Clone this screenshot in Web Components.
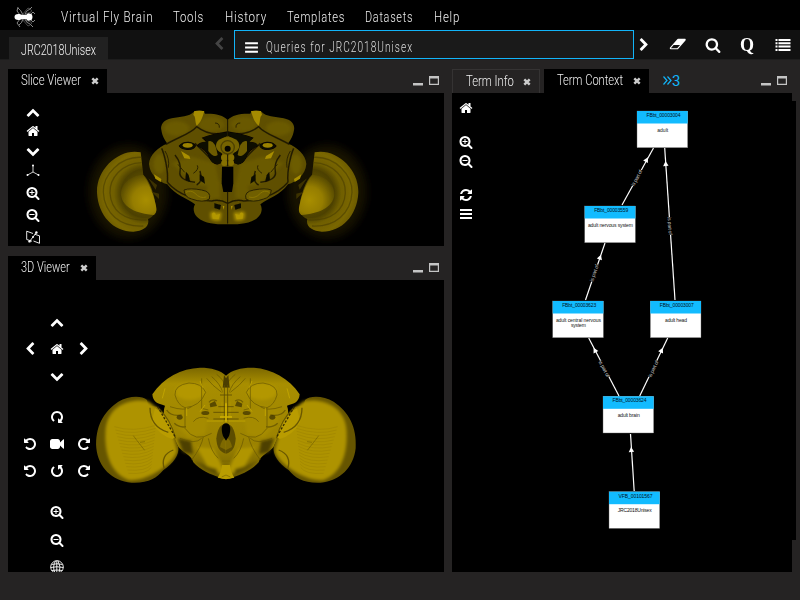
<!DOCTYPE html>
<html lang="en">
<head>
<meta charset="utf-8">
<title>Virtual Fly Brain</title>
<style>
html,body{margin:0;height:100%;overflow:hidden;background:#252323;font-family:Roboto,"Liberation Sans",sans-serif;color:#f0f0f0}
</style>
</head>
<body>
<vfb-app></vfb-app>
<script>
const F = {
left:'M1427 301l-531 531 531 531q19 19 19 45t-19 45l-166 166q-19 19-45 19t-45-19l-742-742q-19-19-19-45t19-45l742-742q19-19 45-19t45 19l166 166q19 19 19 45t-19 45z',
right:'M1363 877l-742 742q-19 19-45 19t-45-19l-166-166q-19-19-19-45t19-45l531-531-531-531q-19-19-19-45t19-45l166-166q19-19 45-19t45 19l742 742q19 19 19 45t-19 45z',
up:'M1683 1331l-166 165q-19 19-45 19t-45-19l-531-531-531 531q-19 19-45 19t-45-19l-166-165q-19-19-19-45.5t19-45.5l742-741q19-19 45-19t45 19l742 741q19 19 19 45.5t-19 45.5z',
down:'M1683 808l-742 741q-19 19-45 19t-45-19l-742-741q-19-19-19-45.5t19-45.5l166-165q19-19 45-19t45 19l531 531 531-531q19-19 45-19t45 19l166 165q19 19 19 45.5t-19 45.5z',
home:'M1472 992v480q0 26-19 45t-45 19h-384v-384h-256v384h-384q-26 0-45-19t-19-45v-480q0-1 .5-3t.5-3l575-474 575 474q1 2 1 6zm223-69l-62 74q-8 9-21 11h-3q-13 0-21-7l-692-577-692 577q-12 8-24 7-13-2-21-11l-62-74q-8-10-7-23.5t11-21.5l719-599q32-26 76-26t76 26l244 204v-195q0-14 9-23t23-9h192q14 0 23 9t9 23v408l219 182q10 8 11 21.5t-7 23.5z',
search:'M1216 832q0-185-131.5-316.5t-316.5-131.5-316.5 131.5-131.5 316.5 131.5 316.5 316.5 131.5 316.5-131.5 131.5-316.5zm512 832q0 52-38 90t-90 38q-54 0-90-38l-343-342q-179 124-399 124-143 0-273.5-55.5t-225-150-150-225-55.5-273.5 55.5-273.5 150-225 225-150 273.5-55.5 273.5 55.5 225 150 150 225 55.5 273.5q0 220-124 399l343 343q37 37 37 90z',
cw:'M1664 256v448q0 26-19 45t-45 19h-448q-42 0-59-40-17-39 14-69l138-138q-148-137-349-137-104 0-198.5 40.5t-163.5 109.5-109.5 163.5-40.5 198.5 40.5 198.5 109.5 163.5 163.5 109.5 198.5 40.5q119 0 225-52t179-147q7-10 23-12 15 0 25 9l137 138q9 8 9.5 20.5t-7.5 22.5q-109 132-264 204.5t-327 72.5q-156 0-298-61t-245-164-164-245-61-298 61-298 164-245 245-164 298-61q147 0 284.5 55.5t244.5 156.5l130-129q29-31 70-14 39 17 39 59z',
video:'M1792 352v1088q0 42-39 59-13 5-25 5-27 0-45-19l-403-403v166q0 119-84.5 203.5t-203.5 84.5h-704q-119 0-203.5-84.5t-84.5-203.5v-704q0-119 84.5-203.5t203.5-84.5h704q119 0 203.5 84.5t84.5 203.5v165l403-402q18-19 45-19 12 0 25 5 39 17 39 59z',
refresh:'M1639 1056q0 5-1 7-64 268-268 434.5t-478 166.5q-146 0-282.5-55t-243.5-157l-129 129q-19 19-45 19t-45-19-19-45v-448q0-26 19-45t45-19h448q26 0 45 19t19 45-19 45l-137 137q71 66 161 102t187 36q134 0 250-65t186-179q11-17 53-117 8-23 30-23h192q13 0 22.5 9.5t9.5 22.5zm25-800v448q0 26-19 45t-45 19h-448q-26 0-45-19t-19-45 19-45l138-138q-148-137-349-137-134 0-250 65t-186 179q-11 17-53 117-8 23-30 23h-199q-13 0-22.5-9.5t-9.5-22.5v-7q65-268 270-434.5t480-166.5q146 0 284 55.5t245 156.5l130-129q19-19 45-19t45 19 19 45z',
};
const p = d => `<path d="${d}"/>`;
const ICONS = {
  left:[1792,p(F.left)], right:[1792,p(F.right)], up:[1792,p(F.up)], down:[1792,p(F.down)],
  home:[1792,p(F.home)], search:[1792,p(F.search)], video:[1792,p(F.video)], refresh:[1792,p(F.refresh)],
  zin:[1792,p(F.search)+'<path d="M448 768h256V512h128v256h256v128H832v256H704V896H448z"/>'],
  zout:[1792,p(F.search)+'<path d="M448 768h640v128H448z"/>'],
  cw:[1792,p(F.cw)],
  cwturn:[1792,`<g transform="rotate(90 896 896)">${p(F.cw)}</g>`],
  ccw:[1792,`<g transform="translate(1792 0) scale(-1 1)">${p(F.cw)}</g>`],
  ccwturn:[1792,`<g transform="rotate(90 896 896) translate(1792 0) scale(-1 1)">${p(F.cw)}</g>`],
  bars:[14,'<path d="M1 2h12v2H1zM1 6h12v2H1zM1 10h12v2H1z"/>'],
  close:[14,'<path d="M4.300 4.300l5.400 5.400M9.700 4.300l-5.400 5.400" fill="none" stroke="currentColor" stroke-width="2.400"/>'],
  min:[14,'<path d="M2 10h10v2.500H2z"/>'],
  max:[14,'<path d="M2 3h10v9H2zM3.200 5.600v5.200h7.600V5.600z" fill-rule="evenodd"/>'],
  list:[16,'<path d="M.5 2h2v2h-2zM3.500 2h12v2h-12zM.5 5.300h2v2h-2zM3.500 5.300h12v2h-12zM.5 8.600h2v2h-2zM3.500 8.600h12v2h-12zM.5 12h2v2h-2zM3.500 12h12v2h-12z"/>'],
  eraser:[2048,'<path transform="translate(32 64)" fill-rule="evenodd" d="M960 1408l336-384h-768l-336 384h768zm1013-1077q15 34 9.500 71.500t-30.500 65.500l-896 1024q-38 44-96 44h-768q-38 0-69.500-20.500t-47.500-54.500q-15-34-9.500-71.500t30.500-65.500l896-1024q38-44 96-44h768q38 0 69.500 20.500t47.500 54.500z"/>'],
  axes:[14,'<path d="M7 1.500V8L1.500 11M7 8l5.500 3" fill="none" stroke="currentColor" stroke-width=".8"/><circle cx="7" cy="1.500" r="1"/><circle cx="1.500" cy="11" r="1"/><circle cx="12.500" cy="11" r="1"/>'],
  plane:[14,'<path d="M.7 1.200L7 3.500M.7 1.200V9.500L6 11.200M8.500 4.200l5 1.600v7.500L7.500 11M3.500 11.500L10.500 2.500" fill="none" stroke="currentColor" stroke-width=".9"/><circle cx="3.500" cy="11.400" r="1.200"/><circle cx="10.400" cy="2.500" r="1.200"/><circle cx="7" cy="7" r=".9"/>'],
  globe:[14,'<g fill="none" stroke="currentColor" stroke-width=".9"><circle cx="7" cy="7" r="6.300"/><path d="M1.500 4.500Q7 3 12.500 4.500M.7 7.500Q7 6 13.300 7.500M1.500 10.500Q7 9.500 12.500 10.500M5.500 .8Q2 7 5 13M8 .7Q11.500 7 9 13M6.800 .7V13"/></g>'],
};
class VfbIcon extends HTMLElement{
  connectedCallback(){
    const s=this.getAttribute('size')||14,[v,g]=ICONS[this.getAttribute('name')];
    this.attachShadow({mode:'open'}).innerHTML=`<style>:host{display:block;width:${s}px;height:${s}px;flex:none}svg{display:block;width:100%;height:100%}</style><svg viewBox="0 0 ${v} ${v}" fill="currentColor">${g}</svg>`;
  }
}
/* Condensed caption: squeezes its text to the width given by w. */
class VfbText extends HTMLElement{
  connectedCallback(){
    const w=+this.getAttribute('w');
    this.attachShadow({mode:'open'}).innerHTML=`<style>:host{display:block;flex:none;width:${w}px;height:20px;line-height:20px;font-weight:300;font-size:${this.getAttribute('size')||15}px}span{display:inline-block;white-space:nowrap;transform-origin:0 50%;letter-spacing:${this.getAttribute('ls')||0}px}</style><span><slot></slot></span>`;
    const s=this.shadowRoot.querySelector('span');
    s.style.transform=`scaleX(${w/(s.offsetWidth||w)})`;
  }
}
class VfbTab extends HTMLElement{
  connectedCallback(){
    const on=this.hasAttribute('on');
    this.attachShadow({mode:'open'}).innerHTML=`<style>:host{display:flex;box-sizing:border-box;height:24px;width:${this.getAttribute('width')}px;padding:1px 0 0 13px;background:${on?'#000':'#252323'};${on?'':'border:1px solid #353333;border-bottom:0;'}}vfb-icon{margin:4px 0 0 ${on?7:6}px;color:#ccc}</style><vfb-text size="15.500" w="${this.getAttribute('w')}">${this.getAttribute('label')}</vfb-text><vfb-icon size="14" name="close"></vfb-icon>`;
  }
}
class VfbPanel extends HTMLElement{
  connectedCallback(){
    this.attachShadow({mode:'open'}).innerHTML=`<style>:host{display:flex;flex-direction:column;min-height:0}header{display:flex;height:24px;flex:none}header ::slotted(vfb-tab[label="Term Context"]){margin-left:4px}.tools{margin-left:auto;display:flex;gap:2px;padding:4px 3px 0 0;color:#c4c4c4}main{flex:1;background:#000;position:relative;overflow:var(--clip,hidden);min-height:0}</style>
    <header><slot name="tabs"></slot><div class="tools"><vfb-icon name="min"></vfb-icon><vfb-icon name="max"></vfb-icon></div></header><main><slot></slot></main>`;
  }
}
/* Icon pad: items are "name@column,row"; rows lists the grid row heights. */
class VfbPad extends HTMLElement{
  connectedCallback(){
    const it=this.getAttribute('items').split(' ').map(s=>{const[n,c]=s.split('@'),[x,y]=c.split(',');return`<vfb-icon name="${n}" style="grid-area:${y}/${x}"></vfb-icon>`}).join('');
    this.attachShadow({mode:'open'}).innerHTML=`<style>:host{position:absolute;left:var(--x);top:var(--y);display:grid;grid-template-columns:repeat(3,27px);grid-template-rows:${this.getAttribute('rows')};color:#fff}</style>${it}`;
  }
}
const mirror=(g,w)=>`<g>${g}</g><g transform="translate(${w} 0) scale(-1 1)">${g}</g>`;
class SliceBrain extends HTMLElement{
  connectedCallback(){
    const half=`
    <ellipse cx="145" cy="290" rx="118" ry="140" fill="#2b2400" opacity=".55" filter="url(#b12)"/>
    <path d="M182 172C120 158 48 220 51 294C55 362 100 410 160 410C190 408 210 394 204 372C220 365 232 350 228 340C225 300 208 255 190 240Z" fill="url(#lobe)" filter="url(#b2)"/>
    <g fill="none" stroke="#4a3e00" stroke-width="4" filter="url(#b2)" opacity=".6"><path d="M184 187C120 184 68 240 70 292C73 355 120 396 190 393"/><path d="M185 203C125 205 88 250 90 294C93 345 130 378 200 375"/></g>
    <path d="M190 240C150 240 120 272 123 300C128 338 170 356 222 360C232 352 230 340 226 325C220 295 205 262 190 240Z" fill="url(#core)" filter="url(#b2)"/>
    <path d="M205 250l26 20-4 14zM215 290l22 6 0 16z" fill="#3d3300" filter="url(#b2)"/>
    <path d="M443 75C430 60 405 55 375 56C372 44 350 43 340 52C330 64 300 66 275 70C250 75 241 90 244 105C247 125 255 135 262 146C235 155 208 180 207 207C210 240 235 260 262 268C285 300 320 310 345 328C335 345 345 365 362 374C385 388 420 388 443 388Z" fill="#5e5000" filter="url(#b2)"/>
    <g filter="url(#b5)"><ellipse cx="290" cy="100" rx="38" ry="22" fill="#6a5a00"/><ellipse cx="395" cy="88" rx="38" ry="22" fill="#695800"/><ellipse cx="238" cy="207" rx="18" ry="30" fill="#6c5b00"/><path d="M275 205l60-20 70 20 15 70-70-5z" fill="#6a5a00"/><path d="M385 255l35 5v50l-45 5z" fill="#6a5a00"/></g>
    <g fill="none" stroke="#1e1900" stroke-width="4.500" filter="url(#b2)" opacity=".9"><path d="M258 148C290 128 330 118 350 95C380 118 415 120 443 110"/><path d="M245 160C252 175 266 225 262 262"/><path d="M285 180Q305 205 300 230T345 262"/><path d="M345 145Q370 168 390 190T415 205"/><path d="M262 262C295 300 350 318 395 318Q420 312 443 325M360 228Q370 260 350 270"/></g>
    <path d="M343 48L373 48C366 72 362 82 350 92C344 78 348 66 340 60Z" fill="#a58b00" filter="url(#b1)"/>
    <path d="M365 128Q398 115 443 110L443 122Q418 130 414 155Q435 180 423 205Q400 215 388 190Q380 165 350 152Q358 140 378 140Z" fill="#080700" filter="url(#b2)"/>
    <path d="M385 139q20-8 28 41q-12 10-28-12z" fill="#6d5c00" filter="url(#b1)"/>
    <path d="M296 153q10-14 30-13q22 4 22 13q-6 13-26 12q-20-2-26-12z" fill="#080700" filter="url(#b1)"/><ellipse cx="323" cy="151" rx="15" ry="7" fill="#9b8200" filter="url(#b1)"/>
    <path d="M303 168l25 15 3 9-18-2zM222 238l22 14-2 9-16-10z" fill="#a88e00" filter="url(#b1)"/>
    <path d="M318 230l8 10 5 22-15-8zM359 238l13 8 3 20-16-10zM403 325l20 5-3 14-17-5z" fill="#0f0c00" filter="url(#b1)"/>
    <path d="M312 285Q330 278 365 285Q395 290 388 312Q370 325 335 312Q314 307 312 285Z" fill="#6f5e00" stroke="#2a2300" stroke-width="3" filter="url(#b1)"/><path d="M318 292q15-8 27 3q15 17 34 11" fill="none" stroke="#8a7500" stroke-width="3" filter="url(#b1)"/>
    <path d="M390 354q12-10 20 0q8-6 15 0l-3 22q-16 6-30-4z" fill="#a68c00" filter="url(#b5)"/><path d="M396 356q8-8 12 4l12-3-4 16-18-2zM428 332l5 2-2 10z" fill="#b39800" filter="url(#b2)"/>
    <path d="M405 84q14 0 13 14M255 168q14 22 10 50M340 235q18-12 12-24M294 208l20 24" fill="none" stroke="#2b2400" stroke-width="3" filter="url(#b1)"/>`;
    this.attachShadow({mode:'open'}).innerHTML=`<style>:host{display:block;margin:2px 0 0 72px;width:300px;height:150px}svg{display:block;width:100%;height:100%}</style>
    <svg viewBox="0 0 900 450"><defs><radialGradient id="lobe" gradientUnits="userSpaceOnUse" cx="195" cy="295" r="145"><stop offset="0" stop-color="#6d5c00"/><stop offset=".5" stop-color="#4d4100"/><stop offset=".64" stop-color="#6f5e00"/><stop offset=".85" stop-color="#7a6700"/><stop offset="1" stop-color="#6a5900"/></radialGradient><radialGradient id="core" gradientUnits="userSpaceOnUse" cx="198" cy="315" r="80"><stop offset="0" stop-color="#a88e00"/><stop offset=".5" stop-color="#957d00"/><stop offset="1" stop-color="#574a00"/></radialGradient>${[1,2,5,12].map(n=>`<filter id="b${n}" x="-50%" y="-50%" width="200%" height="200%"><feGaussianBlur stdDeviation="${n}"/></filter>`).join('')}</defs>
    <g>${mirror(half,886)}
    <ellipse cx="443" cy="152" rx="35" ry="26" fill="#756300"/><circle cx="443" cy="157" r="20" fill="none" stroke="#4d4000" stroke-width="4"/><circle cx="443" cy="161" r="9" fill="#060500"/>
    <path d="M426 215h34v50l-4 26h-26l-5-26z" fill="#030200" filter="url(#b2)"/><circle cx="433" cy="188" r="10" fill="#857000"/><circle cx="453" cy="188" r="10" fill="#857000"/><circle cx="433" cy="204" r="9" fill="#857000"/><circle cx="453" cy="204" r="9" fill="#857000"/>
    <path d="M443 75v38M443 290v95M443 178v35" stroke="#1c1700" stroke-width="3"/></g></svg>`;
  }
}
class SurfaceBrain extends HTMLElement{
  connectedCallback(){
    let rings='';
    for(let i=0;i<15;i++) rings+=`<path d="M${88+i*3} ${215+i*10}q55 ${18-i} ${125-i*4} ${-4-i}"/>`;
    const lobe='M186 135C170 120 130 122 100 140C55 170 30 215 34 280C40 335 80 380 140 383C190 385 215 370 235 345C265 325 283 300 280 275C262 230 240 170 215 155L190 152Z';
    const core='M423 62C405 45 380 38 345 38C290 40 235 68 202 118C204 142 218 146 240 152C225 190 262 235 280 275C290 290 320 300 325 322C345 345 380 360 400 366L412 372H424Z';
    const half=`
    <path d="${core}" fill="url(#sh)"/>
    <g filter="url(#s4)"><ellipse cx="315" cy="110" rx="44" ry="25" fill="#b39700"/><path d="M260 160l60-12 50 30-10 60-50 10-40-40z" fill="#a58b00"/><path d="M335 275l50 5 30 60v20l-45-20z" fill="#b09500"/><path d="M278 250l40 8 6 40-30-6z" fill="#4d4000"/><path d="M325 315q30 30 75 45l-5-18q-40-10-70-27z" fill="#5c4d00"/></g>
    <g fill="none" stroke="#665500" stroke-width="2.500" opacity=".8"><path d="M270 120Q268 90 312 84Q350 84 362 112Q345 155 300 158Q278 150 270 120"/><path d="M350 70V160L370 165M380 65Q405 85 415 115M365 70Q380 90 410 112M395 58Q420 78 420 95"/><path d="M255 155Q300 170 320 155M300 160V220Q330 265 380 235M325 200Q340 180 370 190M285 250Q330 270 350 250M320 315Q350 275 355 245M370 250Q378 290 400 310"/><path d="M372 142q8-12 24-4M245 165q12 20 45 15M268 205q15 14 35 10" stroke-width="4"/></g>
    <g fill="#463a00" opacity=".8" filter="url(#s1)"><ellipse cx="284" cy="187" rx="9" ry="7"/><ellipse cx="361" cy="174" rx="12" ry="6"/><path d="M374 146l16-8 6 15-20 4z"/></g>
    <g fill="none" stroke="#c4a700" stroke-width="2.500"><path d="M365 198h50M345 78l8 20M360 150l-15 20M240 100l-8 30M305 158v25"/></g>
    <path d="${lobe}" fill="#665500"/><path d="M190 139C130 128 70 155 62 220C56 290 75 355 130 375C180 382 265 330 276 288C268 240 240 180 215 158Z" fill="#ae9300" filter="url(#s4)"/>
    <path d="M210 160Q260 185 272 245L262 252Q222 240 200 200Z" fill="#b99c00" filter="url(#s1)"/><path d="M220 160Q258 195 272 250M195 158Q195 215 250 232M265 285Q225 300 238 342" fill="none" stroke="#6a5800" stroke-width="4" filter="url(#s1)"/><path d="M218 155L272 248" stroke="#352b00" stroke-width="4" stroke-dasharray="7 5"/>
    <g fill="none" stroke="#8e7600" stroke-width="1.800" opacity=".5">${rings}</g><path d="M145 242l12 16 22 28M165 262l15-2" fill="none" stroke="#635300" stroke-width="1.500"/>
    <path d="M423 207Q400 205 394 250Q395 290 423 296Z" fill="#5d4d00" filter="url(#s1)"/><path d="M423 245Q408 255 405 276L423 285Z" fill="#7e6900"/>`;
    this.attachShadow({mode:'open'}).innerHTML=`<style>:host{display:block;margin:75px 0 0 77px;width:285px;height:140px}svg{display:block;width:100%;height:100%}</style>
    <svg viewBox="0 0 855 420"><defs><filter id="s4"><feGaussianBlur stdDeviation="5"/></filter><filter id="s1"><feGaussianBlur stdDeviation="1.500"/></filter>
    <linearGradient id="sh" gradientUnits="userSpaceOnUse" x1="300" y1="40" x2="300" y2="370"><stop offset="0" stop-color="#7d6900"/><stop offset=".14" stop-color="#a88e00"/><stop offset=".7" stop-color="#9b8200"/><stop offset="1" stop-color="#6b5a00"/></linearGradient></defs>
    <g>${mirror(half,846)}
    <path d="M417 60l6 10 7-10 4 38h-21z" fill="#4b3e00"/><path d="M413 98h20v28h-20zM408 140h30v46h-30z" fill="#a88e00"/><path d="M418 90v105M428 90v105M405 120h36M400 155h46M385 172h76M385 192h76" stroke="#5c4c00" stroke-width="2.500"/><path d="M423 145v55M405 186h36" stroke="#d0b100" stroke-width="5"/>
    <path d="M423 205C408 205 408 225 414 243L423 257L432 243C438 225 438 205 423 205Z"/><path d="M398 368q10-14 13-38h24q3 24 13 38l-25 5z" fill="#b99d00" filter="url(#s1)"/><path d="M411 318h24M410 366l13-6 13 6" stroke="#796500" stroke-width="2" fill="none"/></g></svg>`;
  }
}
class TermGraph extends HTMLElement{
  connectedCallback(){
    const nodes=[[637,111,'FBbt_00003004',['adult',11]],[584.7,206,'FBbt_00003559',['adult nervous system',45]],[552.7,301,'FBbt_00003623',['adult central nervous',45],['system',15]],[650.3,301,'FBbt_00003007',['adult head',22]],[603,396.3,'FBbt_00003624',['adult brain',22]],[609,491.7,'VFB_00101567',['JRC2018Unisex',34]]];
    const edges=[[622,205,653.5,148,646.5,160,637,178],[675,300,664.7,148,665.7,164,669.7,226],[585.5,300,605,243,600,257.5,594.5,273],[619,396,588.7,338,595,350.5,604,369],[639.7,396,667.7,338,661.5,350.5,653.5,369],[634.2,491,630.5,434,631.3,450]];
    const e=edges.map(([a,b,c,d,x,y,lx,ly])=>{const r=Math.atan2(d-b,c-a)*180/Math.PI,q=r<-90?r+180:r;
      return `<path d="M${a} ${b}L${c} ${d}" stroke="#fff" stroke-width="1.200"/><path transform="translate(${x} ${y}) rotate(${r})" d="M3 0L-2 -2.700V2.700Z" fill="#fff"/>`+(lx?`<g transform="translate(${lx} ${ly}) rotate(${q})"><rect x="-9" y="-2" width="18" height="4"/><text text-anchor="middle" y="1.500" textLength="17.500" font-size="5" fill="#c8c8c8">is part of</text></g>`:'')}).join('');
    const n=nodes.map(([x,y,id,...ls])=>`<g transform="translate(${x} ${y})"><rect width="50.700" height="36.700" fill="#fff" stroke="#666" stroke-width=".4"/><rect width="50.700" height="12.500" fill="#12bbff"/><text x="26.500" y="5.900" text-anchor="middle" textLength="34" font-size="5" fill="#012">${id}</text>${ls.map(([t,w],i)=>`<text x="25.700" y="${20.8+i*5.3}" text-anchor="middle" textLength="${w}" font-size="5" fill="#111">${t}</text>`).join('')}</g>`).join('');
    this.attachShadow({mode:'open'}).innerHTML=`<style>:host{position:absolute;left:8px;top:8px;width:336px;height:439px;background:#000}svg{display:block;font-family:"Liberation Sans",Arial,sans-serif}</style><svg width="336" height="439" viewBox="460 101 336 439">${e}${n}</svg>`;
  }
}
class VfbApp extends HTMLElement{
  connectedCallback(){
    this.attachShadow({mode:'open'}).innerHTML=`<style>
    :host{display:flex;flex-direction:column;width:800px;height:600px;background:#252323}
    nav{height:30px;background:#000;display:flex;align-items:center;box-sizing:border-box;padding:3px 0 0 14px;gap:20.200px}
    .logo{width:23px;height:24px;margin:0 5px 0 -1px;flex:none}
    .bar{height:30px;background:#111;display:flex;box-sizing:border-box;border-bottom:1px solid #1d1d1d}
    .proj{margin:7px 0 0 9px;width:99px;height:23px;background:#212121;box-sizing:border-box;padding:3px 0 0 12px}
    .prev{margin:7px 8px 0 104px;color:#444}
    .query{width:400px;height:29px;box-sizing:border-box;border:1px solid #12b4f8;background:#1a1a1a;display:flex;padding:6px 0 0 9px;gap:7px;color:#dcdcdc}
    .query vfb-icon{color:#fff;margin-top:3px}
    .acts{display:flex;align-items:center;color:#fff;height:29px;padding-left:3px}
    .q{font:bold 19px/20px "Liberation Serif",serif;width:16px;text-align:center;margin:0 19.500px 0 18px;transform:scaleX(.95)}
    .body{flex:1;display:grid;grid-template-columns:436px 340px;grid-template-rows:177px 316px;gap:10px 8px;padding:9px 8px 28px;min-height:0}
    .right{grid-area:1/2/3/3;--clip:visible}
    .more{color:#12b4f8;font-size:15px;line-height:24px;padding-left:14px;display:flex}
    </style>
    <nav><svg class="logo" viewBox="0 0 23 24" fill="none" stroke="#aaa" stroke-width=".8"><path d="M7 10L4 6 5 2M12 10Q12 6 17 4l2-2M12 14q1 4 5 5l3 3M7 14l-3 4 3 4M10 10Q8 5 5 3M10 14q-1 4-4 6M17 10l3-3 2 2M17 14l3 3 2-2"/><path d="M9 10L15 3q5 2 3 4zM9 14l6 7q5-2 3-4z" stroke="#777" stroke-width=".6"/><path d="M1.500 12q0-3.500 5-3l3 1h3.500q2-2.500 3.500-1.500l2 .5q2 3 0 6l-2 .5q-1.500 1-3.500-1.500H9.500l-3 1q-5 .5-5-3z" fill="#fff" stroke="none"/></svg>
    <vfb-text w="92" ls="1">Virtual Fly Brain</vfb-text><vfb-text w="31" ls="1">Tools</vfb-text><vfb-text w="42" ls="1">History</vfb-text><vfb-text w="58" ls="1">Templates</vfb-text><vfb-text w="48.500" ls="1">Datasets</vfb-text><vfb-text w="26" ls="1">Help</vfb-text></nav>
    <div class="bar"><div class="proj"><vfb-text w="75">JRC2018Unisex</vfb-text></div><vfb-icon class="prev" name="left"></vfb-icon>
    <div class="query"><vfb-icon name="bars" size="15"></vfb-icon><vfb-text w="147" ls="1.500">Queries for JRC2018Unisex</vfb-text></div>
    <div class="acts"><vfb-icon name="right"></vfb-icon><vfb-icon name="eraser" size="17" style="margin-left:18px"></vfb-icon><vfb-icon name="search" size="16" style="margin-left:19px"></vfb-icon><span class="q">Q</span><vfb-icon name="list" size="16"></vfb-icon></div></div>
    <div class="body">
      <vfb-panel><vfb-tab slot="tabs" on label="Slice Viewer" w="60" width="99"></vfb-tab><slice-brain></slice-brain><vfb-pad style="--x:18px;--y:12px" rows="19px 20px 20px 22px 22px 22px 14px" items="up@1,1 home@1,2 down@1,3 axes@1,4 zin@1,5 zout@1,6 plane@1,7"></vfb-pad></vfb-panel>
      <vfb-panel class="right"><vfb-tab slot="tabs" label="Term Info" w="48" width="88"></vfb-tab><vfb-tab slot="tabs" on label="Term Context" w="66" width="105"></vfb-tab><span slot="tabs" class="more"><svg width="9" height="24" viewBox="0 0 9 24" fill="none" stroke="#12b4f8" stroke-width="1.200"><path d="M.5 7.500L4 11.500.5 15.500M4.500 7.500L8 11.500 4.500 15.500"/></svg>3</span>
      <term-graph></term-graph><vfb-pad style="--x:7px;--y:8px" rows="34px 19px 34px 19px 14px" items="home@1,1 zin@1,2 zout@1,3 refresh@1,4 bars@1,5"></vfb-pad></vfb-panel>
      <vfb-panel><vfb-tab slot="tabs" on label="3D Viewer" w="49" width="88"></vfb-tab><surface-brain></surface-brain><vfb-pad style="--x:15px;--y:35px" rows="27px 27px 41px 27px 27px 41px 28px 27px 14px" items="up@2,1 left@1,2 home@2,2 right@3,2 down@2,3 cwturn@2,4 ccw@1,5 video@2,5 cw@3,5 ccw@1,6 ccwturn@2,6 cw@3,6 zin@2,7 zout@2,8 globe@2,9"></vfb-pad></vfb-panel>
    </div>`;
  }
}
for(const [n,c] of Object.entries({'vfb-icon':VfbIcon,'vfb-text':VfbText,'vfb-tab':VfbTab,'vfb-panel':VfbPanel,'vfb-pad':VfbPad,'slice-brain':SliceBrain,'surface-brain':SurfaceBrain,'term-graph':TermGraph,'vfb-app':VfbApp})) customElements.define(n,c);
</script>
</body>
</html>
